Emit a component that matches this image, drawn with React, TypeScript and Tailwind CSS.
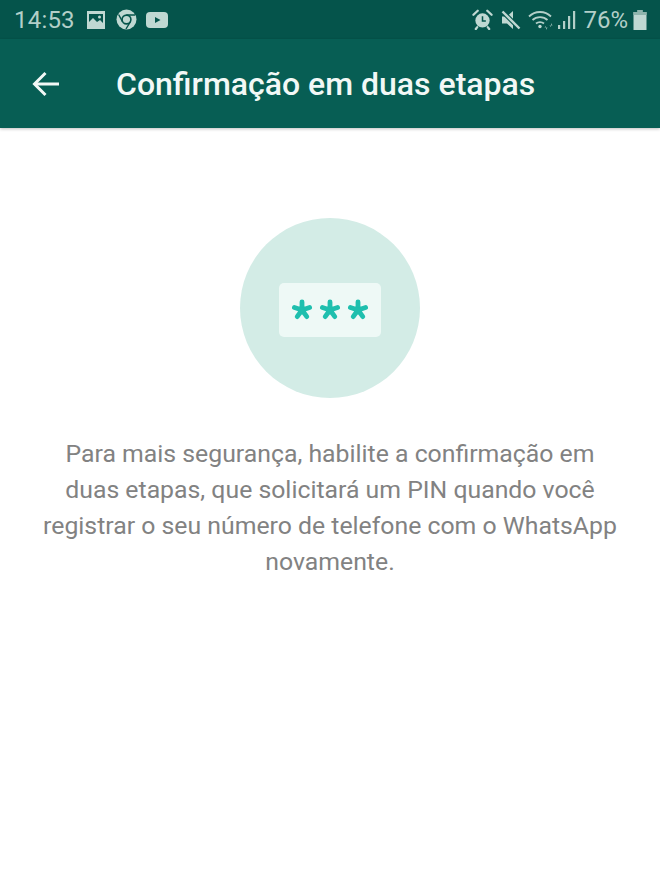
import React from 'react';

const Asterisk = () => (
  <svg width="22" height="22" viewBox="0 0 22 22">
    <circle cx="11" cy="11" r="4.2" fill="#1fbfae" />
    <g stroke="#1fbfae" strokeWidth="4.8" strokeLinecap="round">
      <line x1="11" y1="11" x2="11" y2="3" />
      <line x1="11" y1="11" x2="18.6" y2="8.5" />
      <line x1="11" y1="11" x2="15.8" y2="17.6" />
      <line x1="11" y1="11" x2="6.2" y2="17.6" />
      <line x1="11" y1="11" x2="3.4" y2="8.5" />
    </g>
  </svg>
);

const StatusLeft = () => (
  <div className="flex items-center">
    <span className="text-[24px] leading-none text-[#b3cfc8] tracking-[0.2px]">14:53</span>
    <svg className="ml-[11px]" width="20" height="20" viewBox="0 0 20 20">
      <path fill="#c0d8d2" fillRule="evenodd" d="M1 1h18v18H1z M3 4v8l4-4 4 4 3-2 3 3V4z" />
      <circle cx="13.5" cy="7" r="1.5" fill="#c0d8d2" />
    </svg>
    <svg className="ml-[10px]" width="21" height="21" viewBox="0 0 21 21">
      <circle cx="10.5" cy="10.5" r="10" fill="#c0d8d2" />
      <circle cx="10.5" cy="10.5" r="4.4" fill="none" stroke="#05544b" strokeWidth="1.6" />
      <path d="M10.5 6H19 M6.6 12.8L2.6 5.5 M14.3 12.8L10 20" fill="none" stroke="#05544b" strokeWidth="1.4" />
    </svg>
    <svg className="ml-[9px]" width="22" height="16" viewBox="0 0 22 16">
      <rect x="0" y="0" width="22" height="16" rx="4" fill="#c0d8d2" />
      <path d="M9 5l5.5 3L9 11z" fill="#05544b" />
    </svg>
  </div>
);

const StatusRight = () => (
  <div className="flex items-center">
    <svg width="21" height="21" viewBox="0 0 22 22">
      <circle cx="11" cy="12" r="7.5" fill="#c0d8d2" />
      <path d="M11 7.5V12.5H14.5" fill="none" stroke="#05544b" strokeWidth="1.6" />
      <path d="M1.5 6L6 1.8 M20.5 6L16 1.8 M5.5 19L4 21 M16.5 19L18 21" stroke="#c0d8d2" strokeWidth="2.4" strokeLinecap="round" />
    </svg>
    <svg className="ml-[8px]" width="20" height="20" viewBox="0 0 20 20">
      <path d="M1 6.5h5L12 1v18l-6-5.5H1z" fill="#c0d8d2" />
      <path d="M1.5 1.5L18.5 18.5" stroke="#05544b" strokeWidth="4.5" />
      <path d="M1.5 1.5L18.5 18.5" stroke="#c0d8d2" strokeWidth="2.4" />
    </svg>
    <svg className="ml-[7px]" width="26" height="22" viewBox="0 0 26 22">
      <g fill="none" stroke="#b3cfc8" strokeWidth="1.8">
        <path d="M1 7.5C7 1.5 17 1.5 23 7.5" />
        <path d="M4.5 11C8.5 7.2 15.5 7.2 19.5 11" />
        <path d="M8 14.5C10.2 12.6 13.8 12.6 16 14.5" />
      </g>
      <circle cx="12" cy="17.5" r="1.7" fill="#c0d8d2" />
      <path d="M18 21v-4l-1.6 1.6h3.2z M23 14v4l-1.6-1.6h3.2z" fill="#8fb5ad" />
    </svg>
    <svg className="ml-[4px]" width="18" height="20" viewBox="0 0 18 20">
      <g fill="#b3cfc8">
        <rect x="0" y="15" width="2.2" height="4" />
        <rect x="5" y="11" width="2.2" height="8" />
        <rect x="10" y="6" width="2.2" height="13" />
        <rect x="15" y="1" width="2.2" height="18" />
      </g>
    </svg>
    <span className="ml-[7px] text-[24px] leading-none text-[#b3cfc8]">76%</span>
    <svg className="ml-[5px]" width="14" height="20" viewBox="0 0 14 20">
      <path d="M4.5 0h5v2h4v18H.5V2h4z" fill="#c0d8d2" />
      <path d="M4.5 0h5v2h4v3H.5V2h4z" fill="#8fb5ad" />
    </svg>
  </div>
);

export default function App() {
  return (
    <div className="h-[880px] w-[660px] bg-white font-['Roboto',sans-serif] overflow-hidden">
      <div className="flex h-[39px] items-center justify-between bg-[#05544b] pl-[14px] pr-[13px]">
        <StatusLeft />
        <StatusRight />
      </div>
      <div className="flex h-[89px] items-center bg-[#075e54] pl-[32px] shadow-[0_1px_3px_rgba(0,0,0,0.25)]">
        <svg width="27" height="26" viewBox="0 0 27 26" fill="none" stroke="#f2f8f6" strokeWidth="3">
          <path d="M27 13H3" />
          <path d="M13.5 2L2.5 13l11 11" />
        </svg>
        <h1 className="ml-[57px] pt-[1px] text-[32px] font-medium leading-none text-[#f2f8f6]">
          Confirmação em duas etapas
        </h1>
      </div>
      <div className="flex flex-col items-center pt-[90px]">
        <div className="flex h-[180px] w-[180px] items-center justify-center rounded-full bg-[#d3ece6] pt-[3px]">
          <div className="flex h-[54px] w-[102px] items-center justify-center gap-[6px] rounded-[5px] bg-[#eef9f6]">
            <Asterisk />
            <Asterisk />
            <Asterisk />
          </div>
        </div>
        <p className="mt-[38px] w-[620px] text-center text-[24.8px] leading-[36px] text-[#828282]">
          Para mais segurança, habilite a confirmação em
          <br />
          duas etapas, que solicitará um PIN quando você
          <br />
          registrar o seu número de telefone com o WhatsApp
          <br />
          novamente.
        </p>
      </div>
    </div>
  );
}
